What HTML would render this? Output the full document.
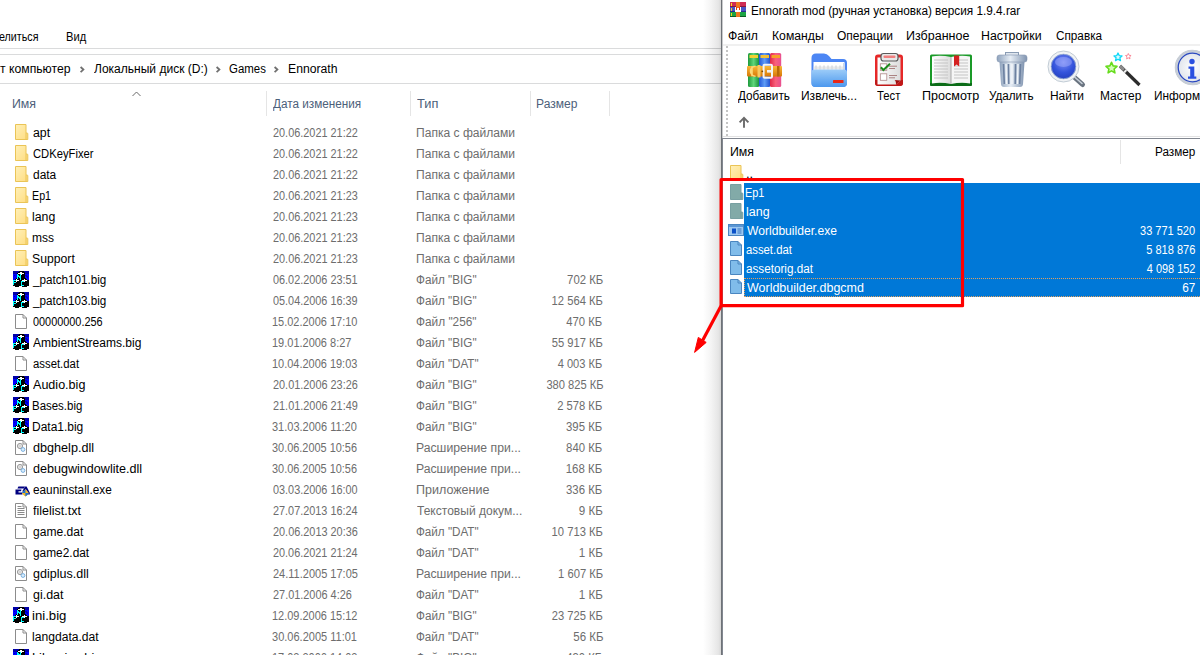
<!DOCTYPE html>
<html lang="ru"><head><meta charset="utf-8"><title>Ennorath</title>
<style>
html,body{margin:0;padding:0;background:#fff;overflow:hidden;width:1200px;height:655px}
#root{width:1200px;height:655px;position:relative;overflow:hidden;font-family:"Liberation Sans", sans-serif;font-size:12px}
.t{position:absolute;white-space:pre;line-height:16px;font-size:12px;display:inline-block}
.ic{position:absolute;overflow:visible}
.ln{position:absolute;background:#dadbdc}
.abs{position:absolute}
</style></head><body><div id="root">

<svg width="0" height="0" style="position:absolute">
<defs>
<linearGradient id="gF" x1="0" y1="0" x2="1" y2="1"><stop offset="0" stop-color="#fff0b8"/><stop offset="1" stop-color="#ffdd80"/></linearGradient>
<linearGradient id="gBk1" x1="0" x2="1"><stop offset="0" stop-color="#1e9a3c"/><stop offset=".5" stop-color="#5fd67a"/><stop offset="1" stop-color="#18903a"/></linearGradient>
<linearGradient id="gBk2" x1="0" x2="1"><stop offset="0" stop-color="#2358d8"/><stop offset=".5" stop-color="#5f9cf5"/><stop offset="1" stop-color="#2050d0"/></linearGradient>
<linearGradient id="gBk3" x1="0" x2="1"><stop offset="0" stop-color="#e02848"/><stop offset=".5" stop-color="#f8607c"/><stop offset="1" stop-color="#e85090"/></linearGradient>
<linearGradient id="gBelt" x1="0" y1="0" x2="0" y2="1"><stop offset="0" stop-color="#f8b838"/><stop offset="1" stop-color="#d87808"/></linearGradient>
<linearGradient id="gFo" x1="0" y1="0" x2="0" y2="1"><stop offset="0" stop-color="#9cccf8"/><stop offset="1" stop-color="#4c98ee"/></linearGradient>
<linearGradient id="gTr" x1="0" x2="1"><stop offset="0" stop-color="#8ea2bc"/><stop offset=".45" stop-color="#e6edf5"/><stop offset="1" stop-color="#8094b0"/></linearGradient>
<radialGradient id="gLens" cx=".5" cy=".35" r=".6"><stop offset="0" stop-color="#7c8cf4"/><stop offset=".6" stop-color="#3454dc"/><stop offset="1" stop-color="#2440c0"/></radialGradient>
<radialGradient id="gInfo" cx=".5" cy=".5" r=".5"><stop offset="0" stop-color="#ffffff"/><stop offset=".75" stop-color="#e4e8ee"/><stop offset="1" stop-color="#b8c0cc"/></radialGradient>
<linearGradient id="gPg" x1="0" x2="1"><stop offset="0" stop-color="#ffffff"/><stop offset="1" stop-color="#dcdcdc"/></linearGradient>
<g id="iFolder"><path d="M.5 .5h10.500v8.500h1q.800 0 .800 .800v5.700h-12.300z" fill="url(#gF)" stroke="#eac456" stroke-width="1"/><path d="M11 9v6" stroke="#eac456" stroke-width="1" fill="none"/></g>
<g id="iFolderSel"><path d="M.5 .5h10.500v8.500h1q.800 0 .800 .800v5.700h-12.300z" fill="#82aaa8" stroke="#78a0a2" stroke-width="1"/><path d="M11 9v6" stroke="#6f9a9c" stroke-width="1" fill="none"/></g>
<g id="iFile"><path d="M.5 .5h7.5l3.5 3.5v10.5h-11z" fill="#fff" stroke="#8c8c8c" stroke-width="1"/><path d="M8 .5v3.5h3.5" fill="none" stroke="#8c8c8c" stroke-width="1"/></g>
<g id="iFileSel"><path d="M.5 .5h7.5l3.5 3.5v10.5h-11z" fill="#80bcea" stroke="#4a86c0" stroke-width="1"/><path d="M8 .5v3.5h3.5" fill="none" stroke="#4a86c0" stroke-width="1"/></g>
<g id="iTxt"><use href="#iFile"/><path d="M2.5 5.5h7M2.5 7.5h7M2.5 9.5h7M2.5 11.5h7M2.5 3.5h4" stroke="#8a8a8a" stroke-width="1"/></g>
<g id="iDll"><use href="#iFile"/><circle cx="5" cy="6" r="2.6" fill="#e8e8e8" stroke="#9a9a9a" stroke-width="1"/><circle cx="5" cy="6" r=".9" fill="#fff" stroke="#aaa" stroke-width=".5"/><circle cx="8" cy="9.5" r="1.9" fill="#d8ecfa" stroke="#7ab0e0" stroke-width="1"/></g>
<g id="iBig" shape-rendering="crispEdges">
 <rect x="0" y="0" width="16" height="3" fill="#0000a8"/><rect x="0" y="3" width="16" height="6" fill="#0000ff"/><rect x="0" y="9" width="16" height="6" fill="#000"/>
 <path d="M2 15h4v1h-4zM9 15h5v1h-5z" fill="#000"/>
 <path d="M7 0h3l2 2v5l3 2h-14l3 -2v-5z" fill="#000"/>
 <path d="M5 2h2v-1h2v1h2v1h-2v1h-2v-1h-2z" fill="#fff"/>
 <path d="M4 3h1v1h1v1h1v-2h1v6h-1v-2h-1v-1h-1v2h-1z" fill="#00ffff"/>
 <path d="M3 8h1v1h2v1h-2v1h-1v-1h-2v-1h2z" fill="#fff"/>
 <path d="M11 8h1v1h2v1h-2v1h-1v-1h-2v-1h2z" fill="#fff"/>
 <path d="M0 9h3v1h-2v1h2v1h-2v2h-1z" fill="#00ffff"/>
 <path d="M8 10h3v1h-2v3h2v1h-3z" fill="#00ffff"/>
 <path d="M1 4h1v1h-1zM12 4h2v1h1v2h-1v-1h-1v-1h-1z" fill="#0000b0"/>
</g>
<g id="iEa"><path d="M3.4 4.4h6.6l-1 2h-6.600zM.5 7.600h6l-.5 1.600h-2.500v1.200h4v2h-7z" fill="#000080"/><path d="M10.200 4.400h1.400l3.200 6.400v1.700h-1.600l-2.300 -5.600l-2 2.600h-1.800z" fill="#000080"/><path d="M10.400 7.600q2.200 1.200 3.400 3.500q-1.200 2.400 -3.400 3.500q-2.200 -1.100 -3.400 -3.500q1.200 -2.300 3.400 -3.500z" fill="#f8b820"/><path d="M10.400 7.600q-2.200 1.200 -3.400 3.500h3.400zM10.400 14.600q2.200 -1.100 3.400 -3.500h-3.400z" fill="#1870d8"/></g>
<g id="iExeSel"><rect x=".5" y=".5" width="15" height="11" fill="#9cc8f0" stroke="#4a86c0"/><rect x="1" y="1" width="14" height="2" fill="#5a96d4"/><rect x="4" y="4.5" width="4" height="5" fill="#0a50c8"/><path d="M9.5 5h4M9.5 7h4M9.5 9h4" stroke="#3a76c0" stroke-width="1"/></g>
</defs></svg>

<!-- Explorer window -->
<div class="abs" style="left:703px;top:0;width:18px;height:655px;background:linear-gradient(90deg,#fff,#f4f4f4 45%,#e6e6e6 85%,#d8d8d8)"></div>
<div class="ln" style="left:0;top:48px;width:721px;height:1px;background:linear-gradient(90deg,#dadbdc 702px,#b9babb 721px)"></div>
<div class="ln" style="left:0;top:54px;width:721px;height:1px;background:linear-gradient(90deg,#dadbdc 702px,#b9babb 721px)"></div>
<div class="ln" style="left:0;top:83px;width:721px;height:1px;background:linear-gradient(90deg,#dadbdc 702px,#b9babb 721px)"></div>
<div class="ln" style="left:266px;top:91px;width:1px;height:25px;background:#e5e5e5"></div>
<div class="ln" style="left:410px;top:91px;width:1px;height:25px;background:#e5e5e5"></div>
<div class="ln" style="left:530px;top:91px;width:1px;height:25px;background:#e5e5e5"></div>
<div class="ln" style="left:609px;top:91px;width:1px;height:25px;background:#e5e5e5"></div>
<svg class="ic" style="left:0;top:0" width="700" height="120" viewBox="0 0 700 120" fill="none">
 <path d="M132.5 96l4 -4l4 4" stroke="#6a6a6a" stroke-width="1"/>
 <path d="M80.6 67l2.8 2.6l-2.8 2.6" stroke="#707070" stroke-width="1.8"/>
 <path d="M216.6 67l2.8 2.6l-2.8 2.6" stroke="#707070" stroke-width="1.8"/>
 <path d="M274.6 67l2.8 2.6l-2.8 2.6" stroke="#707070" stroke-width="1.8"/>
</svg>
<svg class="ic" style="left:14.5px;top:124px" width="16" height="16" viewBox="0 0 16 16"><use href="#iFolder"/></svg>
<svg class="ic" style="left:14.5px;top:145px" width="16" height="16" viewBox="0 0 16 16"><use href="#iFolder"/></svg>
<svg class="ic" style="left:14.5px;top:166px" width="16" height="16" viewBox="0 0 16 16"><use href="#iFolder"/></svg>
<svg class="ic" style="left:14.5px;top:187px" width="16" height="16" viewBox="0 0 16 16"><use href="#iFolder"/></svg>
<svg class="ic" style="left:14.5px;top:208px" width="16" height="16" viewBox="0 0 16 16"><use href="#iFolder"/></svg>
<svg class="ic" style="left:14.5px;top:229px" width="16" height="16" viewBox="0 0 16 16"><use href="#iFolder"/></svg>
<svg class="ic" style="left:14.5px;top:250px" width="16" height="16" viewBox="0 0 16 16"><use href="#iFolder"/></svg>
<svg class="ic" style="left:13px;top:271px" width="16" height="16" viewBox="0 0 16 16"><use href="#iBig"/></svg>
<svg class="ic" style="left:13px;top:292px" width="16" height="16" viewBox="0 0 16 16"><use href="#iBig"/></svg>
<svg class="ic" style="left:15px;top:313.5px" width="12" height="15" viewBox="0 0 12 15"><use href="#iFile"/></svg>
<svg class="ic" style="left:13px;top:334px" width="16" height="16" viewBox="0 0 16 16"><use href="#iBig"/></svg>
<svg class="ic" style="left:15px;top:355.5px" width="12" height="15" viewBox="0 0 12 15"><use href="#iFile"/></svg>
<svg class="ic" style="left:13px;top:376px" width="16" height="16" viewBox="0 0 16 16"><use href="#iBig"/></svg>
<svg class="ic" style="left:13px;top:397px" width="16" height="16" viewBox="0 0 16 16"><use href="#iBig"/></svg>
<svg class="ic" style="left:13px;top:418px" width="16" height="16" viewBox="0 0 16 16"><use href="#iBig"/></svg>
<svg class="ic" style="left:15px;top:439.5px" width="12" height="15" viewBox="0 0 12 15"><use href="#iDll"/></svg>
<svg class="ic" style="left:15px;top:460.5px" width="12" height="15" viewBox="0 0 12 15"><use href="#iDll"/></svg>
<svg class="ic" style="left:14.5px;top:481.5px" width="16" height="16" viewBox="0 0 16 16"><use href="#iEa"/></svg>
<svg class="ic" style="left:15px;top:502.5px" width="12" height="15" viewBox="0 0 12 15"><use href="#iTxt"/></svg>
<svg class="ic" style="left:15px;top:523.5px" width="12" height="15" viewBox="0 0 12 15"><use href="#iFile"/></svg>
<svg class="ic" style="left:15px;top:544.5px" width="12" height="15" viewBox="0 0 12 15"><use href="#iFile"/></svg>
<svg class="ic" style="left:15px;top:565.5px" width="12" height="15" viewBox="0 0 12 15"><use href="#iDll"/></svg>
<svg class="ic" style="left:15px;top:586.5px" width="12" height="15" viewBox="0 0 12 15"><use href="#iFile"/></svg>
<svg class="ic" style="left:13px;top:607px" width="16" height="16" viewBox="0 0 16 16"><use href="#iBig"/></svg>
<svg class="ic" style="left:15px;top:628.5px" width="12" height="15" viewBox="0 0 12 15"><use href="#iFile"/></svg>
<svg class="ic" style="left:13px;top:649px" width="16" height="16" viewBox="0 0 16 16"><use href="#iBig"/></svg>
<!-- shadow + WinRAR window -->
<div class="abs" style="left:721px;top:0;width:479px;height:655px;background:#fff;border-left:1px solid #6e7277;box-sizing:border-box"></div>
<div class="abs" style="left:722px;top:0;width:1px;height:138px;background:#c9cacc"></div>
<div class="abs" style="left:722px;top:138px;width:1px;height:517px;background:#828790"></div>
<div class="abs" style="left:723px;top:44px;width:477px;height:2px;background:#f0f0f0"></div>
<div class="abs" style="left:723px;top:136px;width:477px;height:1px;background:#e2e2e2"></div>
<div class="abs" style="left:722px;top:138px;width:478px;height:1px;background:#828790"></div>
<div class="abs" style="left:726px;top:46px;width:2px;height:90px;background:repeating-linear-gradient(180deg,#fff 0 .5px,#c4c4c4 .5px 2.5px,#fff 2.5px 4px)"></div>
<div class="abs" style="left:1120px;top:140px;width:1px;height:24px;background:#e5e5e5"></div>
<!-- selection -->
<div class="abs" style="left:744px;top:183px;width:456px;height:114px;background:#0078d7"></div>
<div class="abs" style="left:744px;top:278px;width:456px;height:19px;box-sizing:border-box;border-top:1px dotted #e0a060;border-bottom:1px dotted #e0a060;border-left:1px dotted #e0a060"></div>
<svg class="ic" style="left:723px;top:0" width="477" height="140" viewBox="723 0 477 140">
<!-- title icon -->
<g shape-rendering="crispEdges">
 <rect x="730" y="2" width="16" height="5" fill="#d02c54"/>
 <rect x="730" y="7" width="16" height="5" fill="#4c54c4"/>
 <rect x="730" y="12" width="16" height="5" fill="#1ca444"/>
 <rect x="730" y="6" width="16" height="1" fill="#8c1838"/>
 <rect x="730" y="11" width="16" height="1" fill="#2c2c8c"/>
 <rect x="730" y="16" width="16" height="1" fill="#0c5c20"/>
 <rect x="736" y="2" width="4" height="15" fill="#f07820"/>
 <rect x="735" y="7" width="6" height="5" fill="#fff"/>
 <rect x="736" y="7" width="1" height="3" fill="#e83810"/><rect x="739" y="7" width="1" height="3" fill="#e83810"/>
 <rect x="737" y="7" width="2" height="1" fill="#f07820"/>
 <rect x="731" y="3" width="1" height="3" fill="#f8e020"/><rect x="731" y="8" width="1" height="3" fill="#f8d020"/><rect x="731" y="13" width="1" height="3" fill="#f8d020"/>
</g>
<!-- Add: books -->
<g>
 <rect x="748" y="53" width="11.2" height="34" rx="1.5" fill="url(#gBk1)"/>
 <rect x="759" y="53" width="11.2" height="34" rx="1.5" fill="url(#gBk2)"/>
 <rect x="770" y="53" width="11.2" height="34" rx="1.5" fill="url(#gBk3)"/>
 <rect x="749.5" y="55" width="8.5" height="3" fill="#f2d030"/><rect x="760.5" y="55" width="8.5" height="3" fill="#f2c038"/><rect x="771.5" y="55" width="8.5" height="3" fill="#f8a028"/>
 <rect x="747" y="66" width="35" height="10.5" rx="1" fill="url(#gBelt)"/>
 <path d="M752 66.2v10M755.5 66.2a5 5 0 0 0 0 10" stroke="#fbd878" stroke-width="1.6" fill="none"/>
 <rect x="757.5" y="65" width="3" height="12.5" fill="#f6c860"/>
 <rect x="777" y="66" width="2.5" height="10.5" fill="#b86808"/>
 <rect x="763.6" y="64.8" width="8.4" height="13" rx="1" fill="none" stroke="#f4f4f4" stroke-width="2"/>
 <rect x="767" y="70" width="5.5" height="2.6" fill="#f0f0f0"/>
 <circle cx="762.3" cy="71.3" r=".9" fill="#7a4800"/>
</g>
<!-- Extract: folder -->
<g>
 <path d="M811.5 58q0 -4.5 4.5 -4.500h8q3 0 5 2.500l2.500 3h11.500q4 0 4 4v20q0 4 -4 4h-27.500q-4 0 -4 -4z" fill="#4c86f4"/>
 <rect x="813.500" y="62" width="31" height="12" fill="#fff"/>
 <rect x="843" y="63" width="2" height="10" fill="#c8d8f0"/>
 <path d="M816 65.500v4M820 65.500v4M824 65.500v4M828 65.500v4M832 65.500v4M836 65.500v4M840 65.500v4" stroke="#c4c8cc" stroke-width="1"/>
 <rect x="813.500" y="66.500" width="31" height="3" fill="#d8dce0" opacity=".6"/>
 <path d="M811.5 72.500q0 -3 3 -3h29.500q3 0 3 3v10.500q0 4 -4 4h-27.500q-4 0 -4 -4z" fill="url(#gFo)"/>
 <rect x="833" y="80" width="10.500" height="3" rx=".5" fill="#e82818"/>
</g>
<!-- Test: clipboard -->
<g>
 <rect x="875" y="54.500" width="28" height="31.500" rx="3" fill="#e62828"/>
 <path d="M875 80v3q0 3 3 3h22q3 0 3 -3v-3z" fill="#c01818"/>
 <path d="M877.500 57.500h23v23l-4.500 4h-18.500z" fill="url(#gPg)"/>
 <path d="M900.500 80.500l-4.500 4q0 -4 -1.500 -4.500z" fill="#a01010"/>
 <rect x="881" y="53.500" width="17" height="7.500" rx="2.500" fill="#e8e8e8" stroke="#5a5a5a" stroke-width="1.200"/>
 <rect x="883.500" y="55.500" width="12" height="2.500" rx="1" fill="#f08080"/>
 <rect x="880.300" y="63.800" width="6.500" height="6.500" fill="#fff" stroke="#b08888" stroke-width=".8"/>
 <rect x="880.300" y="73.800" width="6.500" height="6.500" fill="#fff" stroke="#b08888" stroke-width=".8"/>
 <path d="M880.800 67.200l2.600 2.800l6.600 -6.200" stroke="#1c8a1c" stroke-width="2" fill="none"/>
 <path d="M889 66.200h8M889 68.500h6M889 75.500h8M889 77.800h6" stroke="#9a6868" stroke-width=".8"/>
</g>
<!-- View: book -->
<g>
 <path d="M930 56q0 -1.500 1.500 -1.500h39q1.500 0 1.500 1.500v28.500q0 1.500 -1.500 1.500h-39q-1.500 0 -1.500 -1.500z" fill="#1a9a28"/>
 <path d="M930 83h42v1.500q0 1.500 -1.500 1.500h-39q-1.500 0 -1.500 -1.500z" fill="#0c6c18"/>
 <path d="M932 56.500q9 -1.500 19 0.500v27q-10 -2 -19 -0.500z" fill="url(#gPg)"/>
 <path d="M970 56.500q-9 -1.500 -19 0.500v27q10 -2 19 -0.500z" fill="#f6f6f6"/>
 <path d="M951 57v27" stroke="#a8a8a8" stroke-width="1"/>
 <path d="M934 60h14M934 63h14M934 66h14M934 69h14M934 72h14M934 75h14M934 78h14M954 60h14M954 63h14M954 66h14M954 69h14M954 72h14M954 75h14M954 78h14" stroke="#c4c4c4" stroke-width="1"/>
 <path d="M954 55.500h5.200v11l-2.600 -2l-2.600 2z" fill="#d42020"/>
</g>
<!-- Delete: trash -->
<g>
 <rect x="1005.500" y="52.500" width="13" height="4" fill="#dfe6ee" stroke="#8a9cb4" stroke-width="1"/>
 <path d="M999.500 62l1.500 22q.2 3 3 3h16q2.800 0 3 -3l1.500 -22z" fill="url(#gTr)"/>
 <path d="M1003.500 64l.8 20M1008.500 64l.3 20M1015.500 64l-.3 20M1020.500 64l-.8 20" stroke="#6c80a0" stroke-width="1.600"/>
 <path d="M1006 64l.5 20M1012 64v20M1018 64l-.5 20" stroke="#f2f6fa" stroke-width="1.400"/>
 <rect x="997" y="55" width="30" height="7" rx="2.500" fill="url(#gTr)" stroke="#8496b0" stroke-width=".6"/>
</g>
<!-- Find: magnifier -->
<g>
 <path d="M1073 76l9.500 8.500" stroke="#6a7480" stroke-width="5" stroke-linecap="round"/>
 <path d="M1074 76.500l8 7" stroke="#c8d0d8" stroke-width="1.600" stroke-linecap="round"/>
 <circle cx="1063.500" cy="66.500" r="14" fill="url(#gLens)" stroke="#f0f2f4" stroke-width="3"/>
 <circle cx="1063.500" cy="66.500" r="15.500" fill="none" stroke="#b4c0cc" stroke-width=".8"/>
 <circle cx="1063.500" cy="66.500" r="12.300" fill="none" stroke="#a0b4d0" stroke-width=".8"/>
 <ellipse cx="1063.500" cy="62" rx="8.500" ry="5" fill="#a8b4ff" opacity=".45"/>
</g>
<!-- Wizard -->
<g>
 <path d="M1120 66l19.500 19" stroke="#2c2c2c" stroke-width="3.200" stroke-linecap="butt"/>
 <path d="M1120 66l4 4" stroke="#8a8a8a" stroke-width="3.200"/>
 <path d="M1124.500 70.500l1.500 1.500" stroke="#f0f0f0" stroke-width="3.200"/>
 <path d="M1111.500 62.300l1.600 3.600l3.900 .4l-2.900 2.700l.8 3.900l-3.400 -2l-3.400 2l.8 -3.900l-2.900 -2.700l3.900 -.4z" fill="#d4fcb8" stroke="#66dc1c" stroke-width="1.600" stroke-linejoin="round"/>
 <path d="M1118 53l1.200 2.600l2.800 .3l-2.100 1.900l.6 2.800l-2.500 -1.400l-2.500 1.400l.6 -2.800l-2.100 -1.900l2.800 -.3z" fill="#d8fcff" stroke="#10d8f8" stroke-width="1.300" stroke-linejoin="round"/>
 <path d="M1128.300 53.500l.8 1.800l2 .2l-1.500 1.400l.4 2l-1.700 -1l-1.700 1l.4 -2l-1.500 -1.400l2 -.2z" fill="#fff" stroke="#f88090" stroke-width=".9" stroke-linejoin="round"/>
</g>
<!-- Info -->
<g>
 <circle cx="1192.500" cy="67.500" r="17.500" fill="url(#gInfo)"/>
 <circle cx="1192.500" cy="67.500" r="17" fill="none" stroke="#c8ced6" stroke-width="1.500"/>
 <circle cx="1192.500" cy="67.500" r="14.300" fill="none" stroke="#2a48c0" stroke-width="1.300"/>
 <circle cx="1192" cy="61.500" r="2.700" fill="#2a50e0"/>
 <path d="M1188.500 66.500h5.800v10h2v2.200h-8.300v-2.200h2.200v-7.800h-1.700z" fill="#2a50e0"/>
</g>
<!-- up arrow -->
<path d="M744 127.800v-9.500M739.600 122.400l4.400 -4.500l4.400 4.500" stroke="#6a6a6a" stroke-width="1.900" fill="none"/>
</svg>

<svg class="ic" style="left:730px;top:165px" width="16" height="16" viewBox="0 0 16 16"><use href="#iFolder"/></svg>
<svg class="ic" style="left:730px;top:184px" width="16" height="16" viewBox="0 0 16 16"><use href="#iFolderSel"/></svg>
<svg class="ic" style="left:730px;top:203px" width="16" height="16" viewBox="0 0 16 16"><use href="#iFolderSel"/></svg>
<svg class="ic" style="left:728px;top:224px" width="16" height="12" viewBox="0 0 16 12"><use href="#iExeSel"/></svg>
<svg class="ic" style="left:730px;top:241px" width="12" height="15" viewBox="0 0 12 15"><use href="#iFileSel"/></svg>
<svg class="ic" style="left:730px;top:260px" width="12" height="15" viewBox="0 0 12 15"><use href="#iFileSel"/></svg>
<svg class="ic" style="left:730px;top:279px" width="12" height="15" viewBox="0 0 12 15"><use href="#iFileSel"/></svg>
<span class="t" id="t0" style="left:-1.5px;top:28.80px;color:#000;transform:scaleX(0.8930);transform-origin:0 0">елиться</span>
<span class="t" id="t1" style="left:66.0px;top:28.80px;color:#000;transform:scaleX(0.9286);transform-origin:0 0">Вид</span>
<span class="t" id="t2" style="left:-0.5px;top:60.80px;color:#000;transform:scaleX(1.0167);transform-origin:0 0">т компьютер</span>
<span class="t" id="t3" style="left:93.86px;top:60.80px;color:#000;transform:scaleX(1.0018);transform-origin:0 0">Локальный диск (D:)</span>
<span class="t" id="t4" style="left:229.41px;top:60.80px;color:#000;transform:scaleX(0.9530);transform-origin:0 0">Games</span>
<span class="t" id="t5" style="left:288px;top:60.80px;color:#000;transform:scaleX(1.0172);transform-origin:0 0">Ennorath</span>
<span class="t" id="t6" style="left:12px;top:95.80px;color:#4c607a;transform:scaleX(1.0287);transform-origin:0 0">Имя</span>
<span class="t" id="t7" style="left:273px;top:95.80px;color:#4c607a;transform:scaleX(0.9774);transform-origin:0 0">Дата изменения</span>
<span class="t" id="t8" style="left:416.53px;top:95.80px;color:#4c607a;transform:scaleX(1.0648);transform-origin:0 0">Тип</span>
<span class="t" id="t9" style="left:536px;top:95.80px;color:#4c607a;transform:scaleX(1.0030);transform-origin:0 0">Размер</span>
<span class="t" id="t10" style="left:32.67px;top:124.80px;color:#000;transform:scaleX(1.0292);transform-origin:0 0">apt</span>
<span class="t" id="t11" style="left:272.54px;top:124.80px;color:#6d6d6d;transform:scaleX(0.9075);transform-origin:0 0">20.06.2021 21:22</span>
<span class="t" id="t12" style="left:416.2px;top:124.80px;color:#6d6d6d;transform:scaleX(1.0052);transform-origin:0 0">Папка с файлами</span>
<span class="t" id="t13" style="left:32.68px;top:145.80px;color:#000;transform:scaleX(0.9353);transform-origin:0 0">CDKeyFixer</span>
<span class="t" id="t14" style="left:272.54px;top:145.80px;color:#6d6d6d;transform:scaleX(0.9075);transform-origin:0 0">20.06.2021 21:22</span>
<span class="t" id="t15" style="left:416.2px;top:145.80px;color:#6d6d6d;transform:scaleX(1.0052);transform-origin:0 0">Папка с файлами</span>
<span class="t" id="t16" style="left:32.97px;top:166.80px;color:#000;transform:scaleX(0.9937);transform-origin:0 0">data</span>
<span class="t" id="t17" style="left:272.54px;top:166.80px;color:#6d6d6d;transform:scaleX(0.9075);transform-origin:0 0">20.06.2021 21:22</span>
<span class="t" id="t18" style="left:416.2px;top:166.80px;color:#6d6d6d;transform:scaleX(1.0052);transform-origin:0 0">Папка с файлами</span>
<span class="t" id="t19" style="left:32.2px;top:187.80px;color:#000;transform:scaleX(0.8911);transform-origin:0 0">Ep1</span>
<span class="t" id="t20" style="left:272.54px;top:187.80px;color:#6d6d6d;transform:scaleX(0.9075);transform-origin:0 0">20.06.2021 21:23</span>
<span class="t" id="t21" style="left:416.2px;top:187.80px;color:#6d6d6d;transform:scaleX(1.0052);transform-origin:0 0">Папка с файлами</span>
<span class="t" id="t22" style="left:32.09px;top:208.80px;color:#000;transform:scaleX(1.0266);transform-origin:0 0">lang</span>
<span class="t" id="t23" style="left:272.54px;top:208.80px;color:#6d6d6d;transform:scaleX(0.9075);transform-origin:0 0">20.06.2021 21:23</span>
<span class="t" id="t24" style="left:416.2px;top:208.80px;color:#6d6d6d;transform:scaleX(1.0052);transform-origin:0 0">Папка с файлами</span>
<span class="t" id="t25" style="left:32.2px;top:229.80px;color:#000;transform:scaleX(1.0001);transform-origin:0 0">mss</span>
<span class="t" id="t26" style="left:272.54px;top:229.80px;color:#6d6d6d;transform:scaleX(0.9075);transform-origin:0 0">20.06.2021 21:23</span>
<span class="t" id="t27" style="left:416.2px;top:229.80px;color:#6d6d6d;transform:scaleX(1.0052);transform-origin:0 0">Папка с файлами</span>
<span class="t" id="t28" style="left:32.2px;top:250.80px;color:#000;transform:scaleX(1.0181);transform-origin:0 0">Support</span>
<span class="t" id="t29" style="left:272.54px;top:250.80px;color:#6d6d6d;transform:scaleX(0.9075);transform-origin:0 0">20.06.2021 21:23</span>
<span class="t" id="t30" style="left:416.2px;top:250.80px;color:#6d6d6d;transform:scaleX(1.0052);transform-origin:0 0">Папка с файлами</span>
<span class="t" id="t31" style="left:33.2px;top:271.80px;color:#000;transform:scaleX(0.9730);transform-origin:0 0">_patch101.big</span>
<span class="t" id="t32" style="left:272.89px;top:271.80px;color:#6d6d6d;transform:scaleX(0.9054);transform-origin:0 0">06.02.2006 23:51</span>
<span class="t" id="t33" style="left:416.32px;top:271.80px;color:#6d6d6d;transform:scaleX(0.9770);transform-origin:0 0">Файл "BIG"</span>
<span class="t" id="t34" style="right:597.28px;top:271.80px;color:#6d6d6d;transform:scaleX(0.9451);transform-origin:100% 0">702 КБ</span>
<span class="t" id="t35" style="left:33.2px;top:292.80px;color:#000;transform:scaleX(0.9730);transform-origin:0 0">_patch103.big</span>
<span class="t" id="t36" style="left:272.89px;top:292.80px;color:#6d6d6d;transform:scaleX(0.9056);transform-origin:0 0">05.04.2006 16:39</span>
<span class="t" id="t37" style="left:416.32px;top:292.80px;color:#6d6d6d;transform:scaleX(0.9770);transform-origin:0 0">Файл "BIG"</span>
<span class="t" id="t38" style="right:597.33px;top:292.80px;color:#6d6d6d;transform:scaleX(0.9350);transform-origin:100% 0">12 564 КБ</span>
<span class="t" id="t39" style="left:33.09px;top:313.80px;color:#000;transform:scaleX(0.9070);transform-origin:0 0">00000000.256</span>
<span class="t" id="t40" style="left:272px;top:313.80px;color:#6d6d6d;transform:scaleX(0.9141);transform-origin:0 0">15.02.2006 17:10</span>
<span class="t" id="t41" style="left:416.29px;top:313.80px;color:#6d6d6d;transform:scaleX(0.9864);transform-origin:0 0">Файл "256"</span>
<span class="t" id="t42" style="right:597.33px;top:313.80px;color:#6d6d6d;transform:scaleX(0.9411);transform-origin:100% 0">470 КБ</span>
<span class="t" id="t43" style="left:32.79px;top:334.80px;color:#000;transform:scaleX(1.0031);transform-origin:0 0">AmbientStreams.big</span>
<span class="t" id="t44" style="left:272px;top:334.80px;color:#6d6d6d;transform:scaleX(0.9154);transform-origin:0 0">19.01.2006 8:27</span>
<span class="t" id="t45" style="left:416.32px;top:334.80px;color:#6d6d6d;transform:scaleX(0.9770);transform-origin:0 0">Файл "BIG"</span>
<span class="t" id="t46" style="right:597.28px;top:334.80px;color:#6d6d6d;transform:scaleX(0.9315);transform-origin:100% 0">55 917 КБ</span>
<span class="t" id="t47" style="left:32.8px;top:355.80px;color:#000;transform:scaleX(0.9454);transform-origin:0 0">asset.dat</span>
<span class="t" id="t48" style="left:272px;top:355.80px;color:#6d6d6d;transform:scaleX(0.9136);transform-origin:0 0">10.04.2006 19:03</span>
<span class="t" id="t49" style="left:416.32px;top:355.80px;color:#6d6d6d;transform:scaleX(0.9713);transform-origin:0 0">Файл "DAT"</span>
<span class="t" id="t50" style="right:597.49px;top:355.80px;color:#6d6d6d;transform:scaleX(0.9234);transform-origin:100% 0">4 003 КБ</span>
<span class="t" id="t51" style="left:32.77px;top:376.80px;color:#000;transform:scaleX(1.0467);transform-origin:0 0">Audio.big</span>
<span class="t" id="t52" style="left:272.54px;top:376.80px;color:#6d6d6d;transform:scaleX(0.9078);transform-origin:0 0">20.01.2006 23:26</span>
<span class="t" id="t53" style="left:416.32px;top:376.80px;color:#6d6d6d;transform:scaleX(0.9770);transform-origin:0 0">Файл "BIG"</span>
<span class="t" id="t54" style="right:596.92px;top:376.80px;color:#6d6d6d;transform:scaleX(0.9289);transform-origin:100% 0">380 825 КБ</span>
<span class="t" id="t55" style="left:32.2px;top:397.80px;color:#000;transform:scaleX(0.9546);transform-origin:0 0">Bases.big</span>
<span class="t" id="t56" style="left:272.54px;top:397.80px;color:#6d6d6d;transform:scaleX(0.9075);transform-origin:0 0">21.01.2006 21:49</span>
<span class="t" id="t57" style="left:416.32px;top:397.80px;color:#6d6d6d;transform:scaleX(0.9770);transform-origin:0 0">Файл "BIG"</span>
<span class="t" id="t58" style="right:597.39px;top:397.80px;color:#6d6d6d;transform:scaleX(0.9335);transform-origin:100% 0">2 578 КБ</span>
<span class="t" id="t59" style="left:32.2px;top:418.80px;color:#000;transform:scaleX(0.9980);transform-origin:0 0">Data1.big</span>
<span class="t" id="t60" style="left:272.31px;top:418.80px;color:#6d6d6d;transform:scaleX(0.9170);transform-origin:0 0">31.03.2006 11:20</span>
<span class="t" id="t61" style="left:416.32px;top:418.80px;color:#6d6d6d;transform:scaleX(0.9770);transform-origin:0 0">Файл "BIG"</span>
<span class="t" id="t62" style="right:597.31px;top:418.80px;color:#6d6d6d;transform:scaleX(0.9462);transform-origin:100% 0">395 КБ</span>
<span class="t" id="t63" style="left:32.81px;top:439.80px;color:#000;transform:scaleX(1.0518);transform-origin:0 0">dbghelp.dll</span>
<span class="t" id="t64" style="left:272.34px;top:439.80px;color:#6d6d6d;transform:scaleX(0.9098);transform-origin:0 0">30.06.2005 10:56</span>
<span class="t" id="t65" style="left:416.2px;top:439.80px;color:#6d6d6d;transform:scaleX(1.0168);transform-origin:0 0">Расширение при...</span>
<span class="t" id="t66" style="right:597.31px;top:439.80px;color:#6d6d6d;transform:scaleX(0.9453);transform-origin:100% 0">840 КБ</span>
<span class="t" id="t67" style="left:32.8px;top:460.80px;color:#000;transform:scaleX(1.0479);transform-origin:0 0">debugwindowlite.dll</span>
<span class="t" id="t68" style="left:272.34px;top:460.80px;color:#6d6d6d;transform:scaleX(0.9098);transform-origin:0 0">30.06.2005 10:56</span>
<span class="t" id="t69" style="left:416.2px;top:460.80px;color:#6d6d6d;transform:scaleX(1.0168);transform-origin:0 0">Расширение при...</span>
<span class="t" id="t70" style="right:597.38px;top:460.80px;color:#6d6d6d;transform:scaleX(0.9551);transform-origin:100% 0">168 КБ</span>
<span class="t" id="t71" style="left:32.82px;top:481.80px;color:#000;transform:scaleX(0.9830);transform-origin:0 0">eauninstall.exe</span>
<span class="t" id="t72" style="left:272.89px;top:481.80px;color:#6d6d6d;transform:scaleX(0.9053);transform-origin:0 0">03.03.2006 16:00</span>
<span class="t" id="t73" style="left:416.2px;top:481.80px;color:#6d6d6d;transform:scaleX(1.0432);transform-origin:0 0">Приложение</span>
<span class="t" id="t74" style="right:597.31px;top:481.80px;color:#6d6d6d;transform:scaleX(0.9462);transform-origin:100% 0">336 КБ</span>
<span class="t" id="t75" style="left:33.39px;top:502.80px;color:#000;transform:scaleX(1.0408);transform-origin:0 0">filelist.txt</span>
<span class="t" id="t76" style="left:272.54px;top:502.80px;color:#6d6d6d;transform:scaleX(0.9054);transform-origin:0 0">27.07.2013 16:24</span>
<span class="t" id="t77" style="left:416.78px;top:502.80px;color:#6d6d6d;transform:scaleX(1.0031);transform-origin:0 0">Текстовый докум...</span>
<span class="t" id="t78" style="right:597.16px;top:502.80px;color:#6d6d6d;transform:scaleX(0.9677);transform-origin:100% 0">9 КБ</span>
<span class="t" id="t79" style="left:32.82px;top:523.80px;color:#000;transform:scaleX(1.0046);transform-origin:0 0">game.dat</span>
<span class="t" id="t80" style="left:272.54px;top:523.80px;color:#6d6d6d;transform:scaleX(0.9078);transform-origin:0 0">20.06.2013 20:36</span>
<span class="t" id="t81" style="left:416.32px;top:523.80px;color:#6d6d6d;transform:scaleX(0.9713);transform-origin:0 0">Файл "DAT"</span>
<span class="t" id="t82" style="right:597.33px;top:523.80px;color:#6d6d6d;transform:scaleX(0.9350);transform-origin:100% 0">10 713 КБ</span>
<span class="t" id="t83" style="left:32.98px;top:544.80px;color:#000;transform:scaleX(0.9900);transform-origin:0 0">game2.dat</span>
<span class="t" id="t84" style="left:272.54px;top:544.80px;color:#6d6d6d;transform:scaleX(0.9054);transform-origin:0 0">20.06.2021 21:24</span>
<span class="t" id="t85" style="left:416.32px;top:544.80px;color:#6d6d6d;transform:scaleX(0.9713);transform-origin:0 0">Файл "DAT"</span>
<span class="t" id="t86" style="right:597.19px;top:544.80px;color:#6d6d6d;transform:scaleX(0.9696);transform-origin:100% 0">1 КБ</span>
<span class="t" id="t87" style="left:32.8px;top:565.80px;color:#000;transform:scaleX(1.0440);transform-origin:0 0">gdiplus.dll</span>
<span class="t" id="t88" style="left:272.52px;top:565.80px;color:#6d6d6d;transform:scaleX(0.9173);transform-origin:0 0">24.11.2005 17:05</span>
<span class="t" id="t89" style="left:416.2px;top:565.80px;color:#6d6d6d;transform:scaleX(1.0168);transform-origin:0 0">Расширение при...</span>
<span class="t" id="t90" style="right:597.26px;top:565.80px;color:#6d6d6d;transform:scaleX(0.9365);transform-origin:100% 0">1 607 КБ</span>
<span class="t" id="t91" style="left:32.81px;top:586.80px;color:#000;transform:scaleX(1.0380);transform-origin:0 0">gi.dat</span>
<span class="t" id="t92" style="left:272.54px;top:586.80px;color:#6d6d6d;transform:scaleX(0.9085);transform-origin:0 0">27.01.2006 4:26</span>
<span class="t" id="t93" style="left:416.32px;top:586.80px;color:#6d6d6d;transform:scaleX(0.9713);transform-origin:0 0">Файл "DAT"</span>
<span class="t" id="t94" style="right:597.19px;top:586.80px;color:#6d6d6d;transform:scaleX(0.9696);transform-origin:100% 0">1 КБ</span>
<span class="t" id="t95" style="left:32.2px;top:607.80px;color:#000;transform:scaleX(1.0977);transform-origin:0 0">ini.big</span>
<span class="t" id="t96" style="left:272px;top:607.80px;color:#6d6d6d;transform:scaleX(0.9142);transform-origin:0 0">12.09.2006 15:12</span>
<span class="t" id="t97" style="left:416.32px;top:607.80px;color:#6d6d6d;transform:scaleX(0.9770);transform-origin:0 0">Файл "BIG"</span>
<span class="t" id="t98" style="right:597.28px;top:607.80px;color:#6d6d6d;transform:scaleX(0.9307);transform-origin:100% 0">23 725 КБ</span>
<span class="t" id="t99" style="left:32.08px;top:628.80px;color:#000;transform:scaleX(1.0097);transform-origin:0 0">langdata.dat</span>
<span class="t" id="t100" style="left:272.31px;top:628.80px;color:#6d6d6d;transform:scaleX(0.9182);transform-origin:0 0">30.06.2005 11:01</span>
<span class="t" id="t101" style="left:416.32px;top:628.80px;color:#6d6d6d;transform:scaleX(0.9713);transform-origin:0 0">Файл "DAT"</span>
<span class="t" id="t102" style="right:596.91px;top:628.80px;color:#6d6d6d;transform:scaleX(0.9591);transform-origin:100% 0">56 КБ</span>
<span class="t" id="t103" style="left:32.2px;top:649.80px;color:#000;transform:scaleX(1.0601);transform-origin:0 0">Libraries.big</span>
<span class="t" id="t104" style="left:272px;top:649.80px;color:#6d6d6d;transform:scaleX(0.9142);transform-origin:0 0">17.02.2006 14:02</span>
<span class="t" id="t105" style="left:416.32px;top:649.80px;color:#6d6d6d;transform:scaleX(0.9770);transform-origin:0 0">Файл "BIG"</span>
<span class="t" id="t106" style="right:597.33px;top:649.80px;color:#6d6d6d;transform:scaleX(0.9411);transform-origin:100% 0">430 КБ</span>
<span class="t" id="t107" style="left:750.8px;top:2.80px;color:#000;transform:scaleX(0.9808);transform-origin:0 0">Ennorath mod (ручная установка) версия 1.9.4.rar</span>
<span class="t" id="t108" style="left:728.26px;top:27.80px;color:#000;transform:scaleX(1.0151);transform-origin:0 0">Файл</span>
<span class="t" id="t109" style="left:771.8px;top:27.80px;color:#000;transform:scaleX(1.0159);transform-origin:0 0">Команды</span>
<span class="t" id="t110" style="left:836.5px;top:27.80px;color:#000;transform:scaleX(0.9985);transform-origin:0 0">Операции</span>
<span class="t" id="t111" style="left:906.0px;top:27.80px;color:#000;transform:scaleX(1.0414);transform-origin:0 0">Избранное</span>
<span class="t" id="t112" style="left:981.0px;top:27.80px;color:#000;transform:scaleX(1.0286);transform-origin:0 0">Настройки</span>
<span class="t" id="t113" style="left:1056.41px;top:27.80px;color:#000;transform:scaleX(0.9787);transform-origin:0 0">Справка</span>
<span class="t" id="t114" style="left:738px;top:87.80px;color:#000;transform:scaleX(0.9786);transform-origin:0 0">Добавить</span>
<span class="t" id="t115" style="left:801.0px;top:87.80px;color:#000;transform:scaleX(0.9999);transform-origin:0 0">Извлечь...</span>
<span class="t" id="t116" style="left:876.61px;top:87.80px;color:#000;transform:scaleX(0.9388);transform-origin:0 0">Тест</span>
<span class="t" id="t117" style="left:922px;top:87.80px;color:#000;transform:scaleX(1.0463);transform-origin:0 0">Просмотр</span>
<span class="t" id="t118" style="left:989.44px;top:87.80px;color:#000;transform:scaleX(0.9712);transform-origin:0 0">Удалить</span>
<span class="t" id="t119" style="left:1050px;top:87.80px;color:#000;transform:scaleX(0.9937);transform-origin:0 0">Найти</span>
<span class="t" id="t120" style="left:1100.0px;top:87.80px;color:#000;transform:scaleX(0.9953);transform-origin:0 0">Мастер</span>
<span class="t" id="t121" style="left:1154.0px;top:87.80px;color:#000;transform:scaleX(0.9850);transform-origin:0 0">Информация</span>
<span class="t" id="t122" style="left:729.8px;top:143.80px;color:#000;transform:scaleX(1.0287);transform-origin:0 0">Имя</span>
<span class="t" id="t123" style="right:4.75px;top:143.80px;color:#000;transform:scaleX(0.9766);transform-origin:100% 0">Размер</span>
<span class="t" id="t124" style="left:745.58px;top:166.40px;color:#000;transform:scaleX(1.0857);transform-origin:0 0">..</span>
<span class="t" id="t125" style="left:745.0px;top:184.80px;color:#fff;transform:scaleX(0.9064);transform-origin:0 0">Ep1</span>
<span class="t" id="t126" style="left:745.93px;top:203.80px;color:#fff;transform:scaleX(1.0409);transform-origin:0 0">lang</span>
<span class="t" id="t127" style="left:746.75px;top:222.80px;color:#fff;transform:scaleX(1.0087);transform-origin:0 0">Worldbuilder.exe</span>
<span class="t" id="t128" style="right:5.380000000000109px;top:222.80px;color:#fff;transform:scaleX(0.9166);transform-origin:100% 0">33 771 520</span>
<span class="t" id="t129" style="left:745.6px;top:241.80px;color:#fff;transform:scaleX(0.9417);transform-origin:0 0">asset.dat</span>
<span class="t" id="t130" style="right:4.789999999999964px;top:241.80px;color:#fff;transform:scaleX(0.9215);transform-origin:100% 0">5 818 876</span>
<span class="t" id="t131" style="left:745.56px;top:260.80px;color:#fff;transform:scaleX(0.9734);transform-origin:0 0">assetorig.dat</span>
<span class="t" id="t132" style="right:5.0px;top:260.80px;color:#fff;transform:scaleX(0.9107);transform-origin:100% 0">4 098 152</span>
<span class="t" id="t133" style="left:746.68px;top:279.80px;color:#fff;transform:scaleX(1.0390);transform-origin:0 0">Worldbuilder.dbgcmd</span>
<span class="t" id="t134" style="right:4.839999999999918px;top:279.80px;color:#fff;transform:scaleX(0.9838);transform-origin:100% 0">67</span>
<!-- annotation -->
<svg class="ic" style="left:680px;top:170px" width="300" height="200" viewBox="680 170 300 200">
 <rect x="721.1" y="179.5" width="241.4" height="126.2" fill="none" stroke="#fe0000" stroke-width="3.2" stroke-linejoin="round"/>
 <path d="M721 306L702.6 340.5" stroke="#fe0000" stroke-width="3.2" fill="none"/>
 <path d="M694.6 352.4L698.3 337.4L706.2 342.4Z" fill="#fe0000" stroke="#fe0000" stroke-width="1" stroke-linejoin="round"/>
</svg>
</div></body></html>
